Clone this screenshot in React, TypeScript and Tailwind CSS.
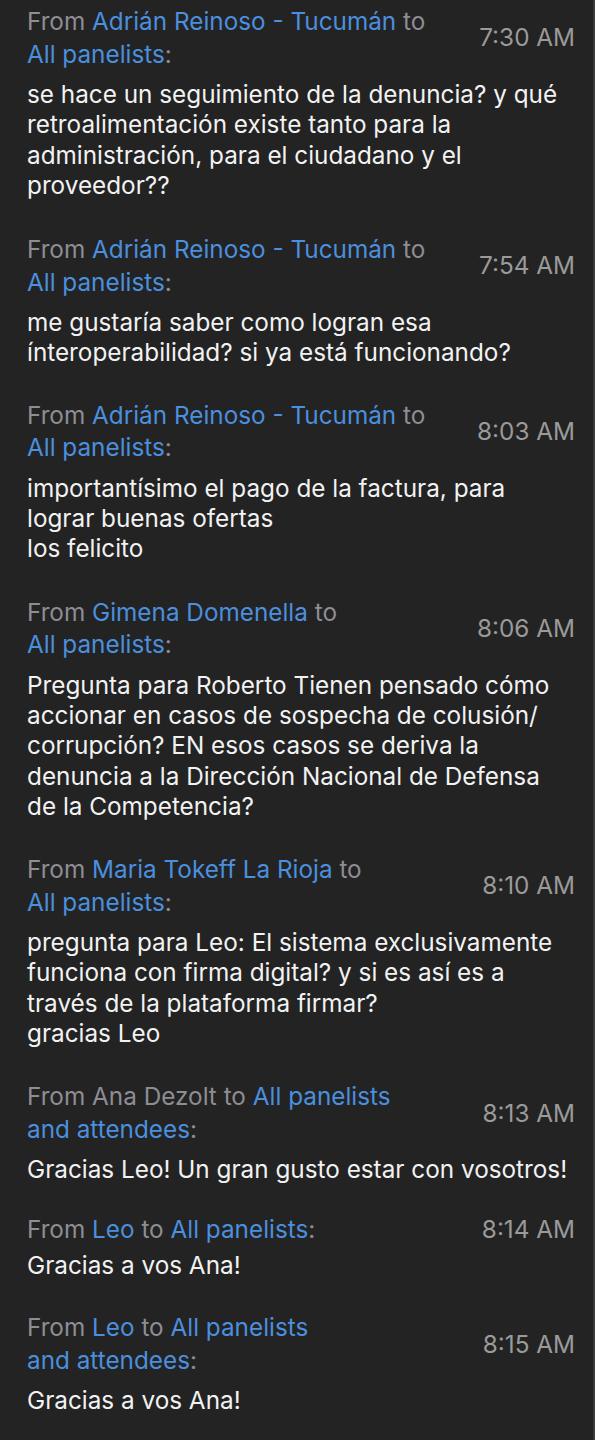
type Seg = { t: string; blue?: boolean }

type Msg = {
  head: Seg[][]
  time: string
  body: string[]
  gapTop: string
  gapBody: string
}

const msgs: Msg[] = [
  {
    head: [
      [{ t: 'From ' }, { t: 'Adrián Reinoso - Tucumán', blue: true }, { t: ' to' }],
      [{ t: 'All panelists', blue: true }, { t: ':' }],
    ],
    time: '7:30 AM',
    body: [
      'se hace un seguimiento de la denuncia? y qué',
      'retroalimentación existe tanto para la',
      'administración, para el ciudadano y el',
      'proveedor??',
    ],
    gapTop: 'mt-[5px]',
    gapBody: 'mt-[9px]',
  },
  {
    head: [
      [{ t: 'From ' }, { t: 'Adrián Reinoso - Tucumán', blue: true }, { t: ' to' }],
      [{ t: 'All panelists', blue: true }, { t: ':' }],
    ],
    time: '7:54 AM',
    body: ['me gustaría saber como logran esa', 'ínteroperabilidad? si ya está funcionando?'],
    gapTop: 'mt-[33px]',
    gapBody: 'mt-[9px]',
  },
  {
    head: [
      [{ t: 'From ' }, { t: 'Adrián Reinoso - Tucumán', blue: true }, { t: ' to' }],
      [{ t: 'All panelists', blue: true }, { t: ':' }],
    ],
    time: '8:03 AM',
    body: ['importantísimo el pago de la factura, para', 'lograr buenas ofertas', 'los felicito'],
    gapTop: 'mt-[31px]',
    gapBody: 'mt-[9px]',
  },
  {
    head: [
      [{ t: 'From ' }, { t: 'Gimena Domenella', blue: true }, { t: ' to' }],
      [{ t: 'All panelists', blue: true }, { t: ':' }],
    ],
    time: '8:06 AM',
    body: [
      'Pregunta para Roberto Tienen pensado cómo',
      'accionar en casos de sospecha de colusión/',
      'corrupción? EN esos casos se deriva la',
      'denuncia a la Dirección Nacional de Defensa',
      'de la Competencia?',
    ],
    gapTop: 'mt-[32px]',
    gapBody: 'mt-[9px]',
  },
  {
    head: [
      [{ t: 'From ' }, { t: 'Maria Tokeff La Rioja', blue: true }, { t: ' to' }],
      [{ t: 'All panelists', blue: true }, { t: ':' }],
    ],
    time: '8:10 AM',
    body: [
      'pregunta para Leo: El sistema exclusivamente',
      'funciona con firma digital? y si es así es a',
      'través de la plataforma firmar?',
      'gracias Leo',
    ],
    gapTop: 'mt-[32px]',
    gapBody: 'mt-[9px]',
  },
  {
    head: [
      [{ t: 'From Ana Dezolt to ' }, { t: 'All panelists', blue: true }],
      [{ t: 'and attendees', blue: true }, { t: ':' }],
    ],
    time: '8:13 AM',
    body: ['Gracias Leo! Un gran gusto estar con vosotros!'],
    gapTop: 'mt-[32px]',
    gapBody: 'mt-[9px]',
  },
  {
    head: [[{ t: 'From ' }, { t: 'Leo', blue: true }, { t: ' to ' }, { t: 'All panelists', blue: true }, { t: ':' }]],
    time: '8:14 AM',
    body: ['Gracias a vos Ana!'],
    gapTop: 'mt-[28px]',
    gapBody: 'mt-[5px]',
  },
  {
    head: [
      [{ t: 'From ' }, { t: 'Leo', blue: true }, { t: ' to ' }, { t: 'All panelists', blue: true }],
      [{ t: 'and attendees', blue: true }, { t: ':' }],
    ],
    time: '8:15 AM',
    body: ['Gracias a vos Ana!'],
    gapTop: 'mt-[31px]',
    gapBody: 'mt-[9px]',
  },
]

function Message({ m }: { m: Msg }) {
  return (
    <div className={m.gapTop}>
      <div className="flex items-center justify-between">
        <div className="text-[24.3px] leading-[32.5px] text-[#8e8d94]">
          {m.head.map((line, i) => (
            <div key={i} className="whitespace-pre">
              {line.map((s, j) => (
                <span key={j} className={s.blue ? 'text-[#4b8fdf]' : undefined}>
                  {s.t}
                </span>
              ))}
            </div>
          ))}
        </div>
        <span className="text-[24.3px] leading-[32.5px] text-[#9a9a9a]">{m.time}</span>
      </div>
      <div className={`${m.gapBody} text-[24.3px] leading-[30.3px] text-[#f2f2f2]`}>
        {m.body.map((l, i) => (
          <div key={i} className="whitespace-pre">{l}</div>
        ))}
      </div>
    </div>
  )
}

export default function App() {
  return (
    <div
      className="h-[1440px] w-[595px] overflow-hidden border-r-2 border-[#3b3b3b] bg-[#232323] pl-[27px] pr-[18px]"
      style={{ fontFamily: 'Inter, "Noto Sans", sans-serif' }}
    >
      {msgs.map((m, i) => (
        <Message key={i} m={m} />
      ))}
    </div>
  )
}
